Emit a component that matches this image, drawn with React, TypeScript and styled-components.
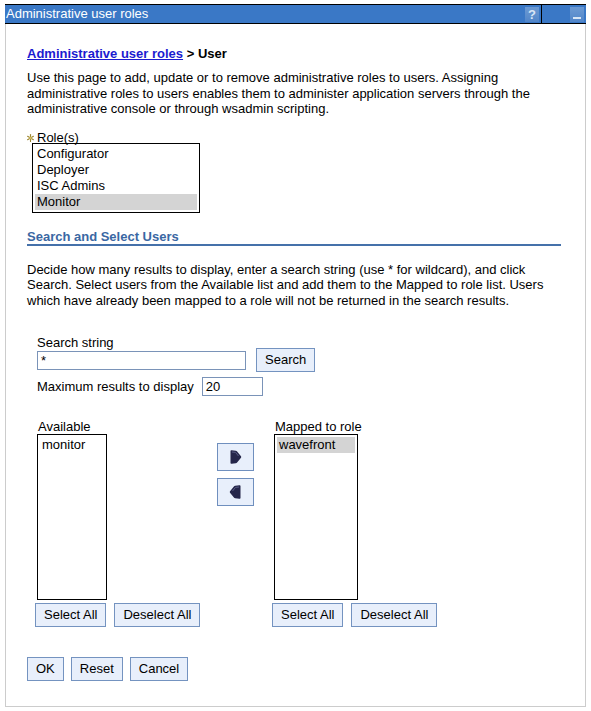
import React from "react";
import styled, { createGlobalStyle } from "styled-components";

const Global = createGlobalStyle`
  html, body { margin: 0; padding: 0; background: #fff; }
  body { font-family: "Liberation Sans", Arial, Helvetica, sans-serif; font-size: 13px; line-height: 16px; color: #000; }
  * { box-sizing: border-box; }
`;

const Portlet = styled.div`
  margin: 4px 0 0 5px;
  width: 581px;
`;

const TitleBar = styled.div`
  height: 20px;
  background: #3a78c6;
  border-top: 1px solid #000;
  border-bottom: 1px solid #000;
  display: flex;
  align-items: center;
  color: #fff;
`;

const TitleText = styled.div`
  flex: 1;
  padding-left: 1px;
  font-size: 13px;
  line-height: 18px;
`;

const TitleIconCell = styled.div<{ $last?: boolean }>`
  height: 18px;
  width: 44px;
  display: flex;
  align-items: center;
  justify-content: flex-end;
  padding-right: 2px;
  border-right: ${(p) => (p.$last ? "none" : "1px solid #000")};
`;

const TitleIconBox = styled.div`
  width: 14px;
  height: 15px;
  background: linear-gradient(180deg, #6c9ad3 0%, #5286c9 100%);
  display: flex;
  align-items: center;
  justify-content: center;
  color: #d8e6f6;
  font-weight: bold;
  font-size: 13px;
  line-height: 15px;
`;

const Panel = styled.div`
  border: 1px solid #ccc;
  border-top: none;
  height: 683px;
  padding: 22px 0 0 21px;
`;

const Breadcrumb = styled.div`
  font-weight: bold;
`;

const Link = styled.a`
  color: #1b1bd0;
  text-decoration: underline;
`;

const Para = styled.p<{ $top: number }>`
  margin: ${(p) => p.$top}px 0 0 0;
  width: 540px;
  line-height: 15.5px;
`;

const RoleLabel = styled.div`
  margin-top: 14px;
  margin-bottom: -3px;
  display: flex;
  align-items: center;
  height: 15px;
`;

const Star = styled.span`
  display: inline-flex;
  width: 7px;
  margin-right: 3px;
`;

const ListBox = styled.div<{ $w: number; $h: number }>`
  width: ${(p) => p.$w}px;
  height: ${(p) => p.$h}px;
  border: 1px solid #000;
  padding: 2px 2px;
  background: #fff;
`;

const ListItem = styled.div<{ $sel?: boolean }>`
  height: 16px;
  line-height: 16px;
  padding-left: 2px;
  background: ${(p) => (p.$sel ? "#d4d4d4" : "transparent")};
`;

const RoleList = styled(ListBox)`
  margin-left: 5px;
`;

const SectionHead = styled.div`
  margin-top: 16px;
  width: 534px;
  font-weight: bold;
  color: #3a67a3;
  line-height: 15px;
  border-bottom: 2px solid #4571aa;
`;

const SearchBlock = styled.div`
  margin-top: 27px;
  padding-left: 10px;
`;

const FieldLabel = styled.div`
  margin-bottom: -3px;
`;

const FieldRow = styled.div<{ $top: number }>`
  display: flex;
  align-items: center;
  margin-top: ${(p) => p.$top}px;
`;

const TextInput = styled.div<{ $w: number }>`
  width: ${(p) => p.$w}px;
  height: 19px;
  border: 1px solid #7a93b8;
  padding: 0 3px;
  line-height: 17px;
  background: #fff;
`;

const Button = styled.button`
  font-family: "Liberation Sans", Arial, Helvetica, sans-serif;
  font-size: 13px;
  height: 24px;
  padding: 0 8px;
  background: #e8effb;
  border: 1px solid #7493c0;
  color: #000;
  cursor: pointer;
  line-height: 22px;
`;

const SearchButton = styled(Button)`
  margin-left: 10px;
`;

const SmallInput = styled(TextInput)`
  margin-left: 8px;
`;

const ArrowButton = styled.button`
  width: 37px;
  height: 28px;
  padding: 0;
  background: #e8effb;
  border: 1px solid #6f8fbe;
  display: flex;
  align-items: center;
  justify-content: center;
`;

const ListsRow = styled.div`
  display: flex;
  margin-top: 22px;
  margin-left: -2px;
`;

const Column = styled.div<{ $w: number }>`
  width: ${(p) => p.$w}px;
  display: flex;
  flex-direction: column;
`;

const ColLabel = styled.div`
  padding-left: 3px;
  line-height: 18px;
  height: 16px;
`;

const ColList = styled(ListBox)`
  margin-left: 2px;
`;

const ButtonRow = styled.div`
  display: flex;
  gap: 8px;
  margin-top: 3px;
`;

const ArrowCol = styled.div`
  width: 55px;
  display: flex;
  flex-direction: column;
  gap: 7px;
  padding-top: 25px;
`;

const Footer = styled.div`
  display: flex;
  gap: 7px;
  margin-top: 30px;
`;

const StarIcon = () => (
  <svg width="7" height="8" viewBox="0 0 7 8">
    <g stroke="#9c8630" strokeWidth="1.1" strokeLinecap="round">
      <line x1="3.5" y1="0.6" x2="3.5" y2="7.4" />
      <line x1="0.6" y1="2.3" x2="6.4" y2="5.7" />
      <line x1="0.6" y1="5.7" x2="6.4" y2="2.3" />
    </g>
    <circle cx="3.5" cy="4" r="1.3" fill="#d2bd5c" />
  </svg>
);

const ArrowIcon = ({ dir }: { dir: "right" | "left" }) => (
  <svg width="13" height="16" viewBox="0 0 13 16" style={dir === "left" ? { transform: "scaleX(-1)" } : undefined}>
    <path
      d="M1.5 2 Q1.5 1 2.6 1.2 L6.8 1.8 Q7.6 1.9 8.1 2.6 L12 7.3 Q12.5 8 12 8.7 L8.1 13.4 Q7.6 14.1 6.8 14.2 L2.6 14.8 Q1.5 15 1.5 14 Z"
      fill="#25264a"
    />
    <path d="M3 3 L6.5 3.4 L9.5 7" stroke="#5a5d86" strokeWidth="1" fill="none" />
  </svg>
);

const MinIcon = () => (
  <svg width="14" height="15" viewBox="0 0 14 15">
    <rect x="3" y="10" width="8" height="2" fill="#d8e6f6" />
  </svg>
);

export default function App() {
  return (
    <>
      <Global />
      <Portlet>
        <TitleBar>
          <TitleText>Administrative user roles</TitleText>
          <TitleIconCell>
            <TitleIconBox>?</TitleIconBox>
          </TitleIconCell>
          <TitleIconCell $last>
            <TitleIconBox>
              <MinIcon />
            </TitleIconBox>
          </TitleIconCell>
        </TitleBar>
        <Panel>
          <Breadcrumb>
            <Link href="#">Administrative user roles</Link> &gt; User
          </Breadcrumb>
          <Para $top={8}>
            Use this page to add, update or to remove administrative roles to users. Assigning administrative roles to
            users enables them to administer application servers through the administrative console or through wsadmin
            scripting.
          </Para>
          <RoleLabel>
            <Star>
              <StarIcon />
            </Star>
            Role(s)
          </RoleLabel>
          <RoleList $w={168} $h={70}>
            <ListItem>Configurator</ListItem>
            <ListItem>Deployer</ListItem>
            <ListItem>ISC Admins</ListItem>
            <ListItem $sel>Monitor</ListItem>
          </RoleList>
          <SectionHead>Search and Select Users</SectionHead>
          <Para $top={16}>
            Decide how many results to display, enter a search string (use * for wildcard), and click Search. Select
            users from the Available list and add them to the Mapped to role list. Users which have already been mapped
            to a role will not be returned in the search results.
          </Para>
          <SearchBlock>
            <FieldLabel>Search string</FieldLabel>
            <FieldRow $top={0}>
              <TextInput $w={209}>*</TextInput>
              <SearchButton>Search</SearchButton>
            </FieldRow>
            <FieldRow $top={5}>
              <span>Maximum results to display</span>
              <SmallInput $w={61}>20</SmallInput>
            </FieldRow>
            <ListsRow>
              <Column $w={182}>
                <ColLabel>Available</ColLabel>
                <ColList $w={70} $h={166}>
                  <ListItem>monitor</ListItem>
                </ColList>
                <ButtonRow>
                  <Button>Select All</Button>
                  <Button>Deselect All</Button>
                </ButtonRow>
              </Column>
              <ArrowCol>
                <ArrowButton aria-label="Add">
                  <ArrowIcon dir="right" />
                </ArrowButton>
                <ArrowButton aria-label="Remove">
                  <ArrowIcon dir="left" />
                </ArrowButton>
              </ArrowCol>
              <Column $w={180}>
                <ColLabel>Mapped to role</ColLabel>
                <ColList $w={84} $h={166}>
                  <ListItem $sel>wavefront</ListItem>
                </ColList>
                <ButtonRow>
                  <Button>Select All</Button>
                  <Button>Deselect All</Button>
                </ButtonRow>
              </Column>
            </ListsRow>
          </SearchBlock>
          <Footer>
            <Button>OK</Button>
            <Button>Reset</Button>
            <Button>Cancel</Button>
          </Footer>
        </Panel>
      </Portlet>
    </>
  );
}
